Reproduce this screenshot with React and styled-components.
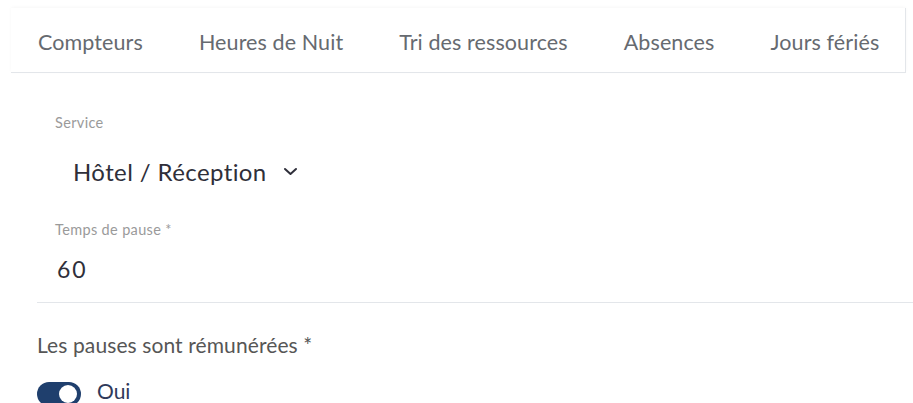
import React from "react";
import styled, { createGlobalStyle } from "styled-components";

const Global = createGlobalStyle`
  html, body { margin: 0; padding: 0; background: #fff; }
  body { font-family: Lato, "Open Sans", sans-serif; overflow: hidden; }
`;

const Page = styled.div`
  width: 913px;
  height: 403px;
  overflow: hidden;
  display: flex;
  flex-direction: column;
  background: #fff;
`;

const TabsWrap = styled.div`
  padding: 8px 7px 0 11px;
`;

const TabBar = styled.nav`
  display: flex;
  align-items: center;
  height: 64px;
  border-bottom: 1px solid #e3e6ea;
  border-right: 1px solid #e3e6ea;
  box-shadow: 0 -1px 3px rgba(0, 0, 0, 0.03);
`;

const Tab = styled.div`
  padding: 0 28px 0 27px;
  font-size: 21.5px;
  letter-spacing: 0.1px;
  color: #666a70;
  line-height: 1;
  margin-top: 6px;
  white-space: nowrap;
  & + & { padding-left: 28px; }
`;

const Body = styled.div`
  display: flex;
  flex-direction: column;
  padding-left: 37px;
`;

const FieldLabel = styled.div`
  font-size: 14.5px;
  color: #9a9a9a;
  line-height: 1;
  padding-left: 18px;
  letter-spacing: 0.35px;
  margin-top: ${(p) => p.$top}px;
`;

const SelectRow = styled.div`
  display: flex;
  align-items: center;
  gap: 16px;
  padding-left: 36px;
  margin-top: 29px;
  font-size: 24px;
  letter-spacing: 0.4px;
  color: #2f2f3a;
  line-height: 1;
`;

const Input = styled.div`
  margin-top: 21px;
  padding: 0 0 21px 20px;
  border-bottom: 1px solid #e3e6ea;
  font-size: 23px;
  letter-spacing: 2px;
  color: #2f2f3a;
  line-height: 1;
`;

const GroupLabel = styled.div`
  margin-top: 31px;
  font-size: 21px;
  letter-spacing: 0.1px;
  color: #565656;
  line-height: 1;
`;

const ToggleRow = styled.div`
  display: flex;
  align-items: flex-start;
  gap: 16px;
  margin-top: 27px;
`;

const Track = styled.div`
  width: 44px;
  height: 24px;
  border-radius: 12px;
  background: #1f3f6d;
  display: flex;
  align-items: center;
  justify-content: flex-end;
  padding: 0 4px;
  box-sizing: border-box;
  flex-shrink: 0;
`;

const Knob = styled.div`
  width: 18px;
  height: 18px;
  border-radius: 50%;
  background: #fff;
`;

const ToggleText = styled.span`
  font-size: 21px;
  color: #2f3a5a;
  line-height: 1;
  margin-top: -2px;
`;

const Chevron = () => (
  <svg width="15" height="9" viewBox="0 0 15 9" fill="none">
    <path d="M2 2l5.5 5L13 2" stroke="#2f2f3a" strokeWidth="2" strokeLinecap="round" strokeLinejoin="round" />
  </svg>
);

const tabs = ["Compteurs", "Heures de Nuit", "Tri des ressources", "Absences", "Jours fériés"];

export default function App() {
  return (
    <Page>
      <Global />
      <TabsWrap>
        <TabBar>
          {tabs.map((t) => (
            <Tab key={t}>{t}</Tab>
          ))}
        </TabBar>
      </TabsWrap>
      <Body>
        <FieldLabel $top={43}>Service</FieldLabel>
        <SelectRow>
          <span>Hôtel / Réception</span>
          <Chevron />
        </SelectRow>
        <FieldLabel $top={39}>Temps de pause *</FieldLabel>
        <Input>60</Input>
        <GroupLabel>Les pauses sont rémunérées *</GroupLabel>
        <ToggleRow>
          <Track>
            <Knob />
          </Track>
          <ToggleText>Oui</ToggleText>
        </ToggleRow>
      </Body>
    </Page>
  );
}
